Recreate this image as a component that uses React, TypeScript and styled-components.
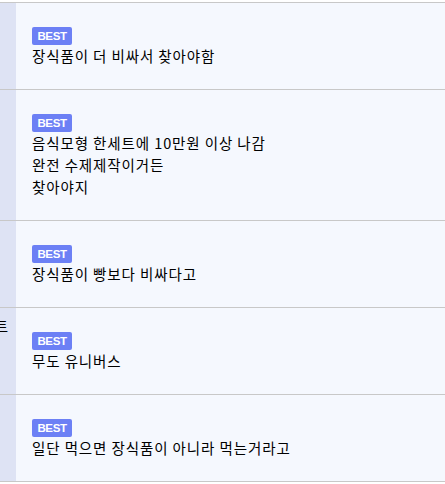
import styled, { createGlobalStyle } from 'styled-components';

const GlobalStyle = createGlobalStyle`
  html, body {
    margin: 0;
    padding: 0;
    background: #ffffff;
  }
  body {
    font-family: "Noto Sans CJK KR", "Noto Sans", sans-serif;
  }
`

const Board = styled.div`
  padding-top: 2px;
  display: flex;
  flex-direction: column;
  border-bottom: 1px solid #c8c8c8;
`

const Row = styled.div`
  display: grid;
  grid-template-columns: 16px 1fr;
  border-top: 1px solid #c8c8c8;
`

const Side = styled.div`
  background: #dee3f4;
  display: flex;
  justify-content: flex-end;
  align-items: flex-start;
  overflow: hidden;
  padding: 7px 8px 0 0;
  font-size: 14.5px;
  line-height: 22px;
  color: #000;
  white-space: nowrap;
`

const Body = styled.div`
  background: #f5f8fe;
  padding: 24px 16px 22px 16px;
  display: flex;
  flex-direction: column;
  align-items: flex-start;
`

const Badge = styled.span`
  display: inline-flex;
  align-items: center;
  justify-content: center;
  width: 40px;
  height: 18px;
  border-radius: 2px;
  background: #6c80f5;
  color: #ffffff;
  font-family: "Liberation Sans", Arial, sans-serif;
  font-weight: bold;
  font-size: 11.5px;
  letter-spacing: -0.4px;
`

const Text = styled.div`
  font-size: 14.5px;
  line-height: 22px;
  letter-spacing: 0.9px;
  color: #000;
`

type Post = { side?: string; lines: string[] }

const posts: Post[] = [
  { lines: ['장식품이 더 비싸서 찾아야함'] },
  { lines: ['음식모형 한세트에 10만원 이상 나감', '완전 수제제작이거든', '찾아야지'] },
  { lines: ['장식품이 빵보다 비싸다고'] },
  { side: '한세트', lines: ['무도 유니버스'] },
  { lines: ['일단 먹으면 장식품이 아니라 먹는거라고'] },
]

export default function App() {
  return (
    <>
      <GlobalStyle />
      <Board>
        {posts.map((p, i) => (
          <Row key={i}>
            <Side>{p.side}</Side>
            <Body>
              <Badge>BEST</Badge>
              {p.lines.map((l) => <Text key={l}>{l}</Text>)}
            </Body>
          </Row>
        ))}
      </Board>
    </>
  )
}
